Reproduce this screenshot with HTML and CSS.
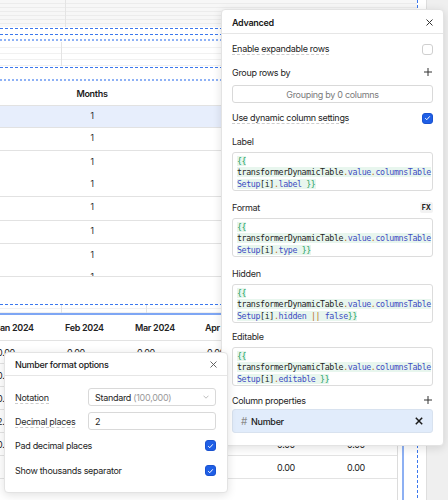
FILE: index.html
```html
<!DOCTYPE html>
<html lang="en">
<head>
    <meta charset="UTF-8">
    <title>Table settings</title>
    <link rel="stylesheet" href="styles.css">
</head>
<body>
    <!-- editor canvas behind the panels -->
    <div class="canvas">
        <div class="stripes stripes-top"><div class="vline vline-top"></div></div>
        <div class="guide guide-28"></div>
        <div class="guide guide-34"></div>
        <div class="guide guide-40 soft"></div>
        <div class="faint-zone"><div class="vline vline-mid"></div></div>
        <div class="guide guide-67"></div>
        <div class="guide guide-80 soft"></div>

        <div class="months-table">
            <div class="mt-row mt-head"><div class="mt-cell">Months</div></div>
            <div class="mt-row r22 selected"><div class="mt-cell">1</div></div>
            <div class="mt-row r23"><div class="mt-cell">1</div></div>
            <div class="mt-row r46"><div class="mt-cell">1<br>1</div></div>
            <div class="mt-row r24"><div class="mt-cell">1</div></div>
            <div class="mt-row r23"><div class="mt-cell">1</div></div>
            <div class="mt-row r33"><div class="mt-cell">1<br>1</div></div>
        </div>

        <div class="guide guide-304"></div>

        <div class="month-grid">
            <div class="mg-stripes"><div class="vline vline-a"></div><div class="vline vline-b"></div></div>
            <div class="mg-row mg-head">
                <div class="mg-cell">Jan 2024</div><div class="mg-cell">Feb 2024</div><div class="mg-cell">Mar 2024</div>
                <div class="mg-cell">Apr 2024</div><div class="mg-cell">May 2024</div><div class="mg-cell">Jun 2024</div>
            </div>
            <div class="mg-row"><div class="mg-cell">0.00</div><div class="mg-cell">0.00</div><div class="mg-cell">0.00</div><div class="mg-cell">0.00</div><div class="mg-cell">0.00</div><div class="mg-cell">0.00</div></div>
            <div class="mg-row"><div class="mg-cell">0.00</div><div class="mg-cell">0.00</div><div class="mg-cell">0.00</div><div class="mg-cell">0.00</div><div class="mg-cell">0.00</div><div class="mg-cell">0.00</div></div>
            <div class="mg-row"><div class="mg-cell">0.00</div><div class="mg-cell">0.00</div><div class="mg-cell">0.00</div><div class="mg-cell">0.00</div><div class="mg-cell">0.00</div><div class="mg-cell">0.00</div></div>
            <div class="mg-row"><div class="mg-cell">2.00</div><div class="mg-cell">0.00</div><div class="mg-cell">0.00</div><div class="mg-cell">0.00</div><div class="mg-cell">0.00</div><div class="mg-cell">0.00</div></div>
            <div class="mg-row"><div class="mg-cell">0.00</div><div class="mg-cell">0.00</div><div class="mg-cell">0.00</div><div class="mg-cell">0.00</div><div class="mg-cell">0.00</div><div class="mg-cell">0.00</div></div>
            <div class="mg-row"><div class="mg-cell"></div><div class="mg-cell"></div><div class="mg-cell"></div><div class="mg-cell"></div><div class="mg-cell">0.00</div><div class="mg-cell">0.00</div></div>
            <div class="mg-row"><div class="mg-cell"></div><div class="mg-cell"></div><div class="mg-cell"></div><div class="mg-cell"></div><div class="mg-cell"></div><div class="mg-cell"></div></div>
        </div>

        <div class="sel-line"></div>
        <div class="sel-dash"></div>
        <div class="side-strip"></div>
    </div>

    <!-- Advanced panel -->
    <div class="panel advanced">
        <div class="panel-head">
            <span class="panel-title">Advanced</span>
            <svg class="close" width="7" height="7" viewBox="0 0 7 7"><path d="M0.5 0.5L6.5 6.5M6.5 0.5L0.5 6.5" stroke="#333" stroke-width="1"/></svg>
        </div>
        <div class="panel-body">
            <div class="row first">
                <span class="hint">Enable expandable rows</span>
                <span class="checkbox"></span>
            </div>
            <div class="row spaced">
                <span>Group rows by</span>
                <svg class="plus" width="8" height="8" viewBox="0 0 8 8"><path d="M4 0V8M0 4H8" stroke="#333" stroke-width="1"/></svg>
            </div>
            <div class="group-input">Grouping by 0 columns</div>
            <div class="row dynamic">
                <span class="hint">Use dynamic column settings</span>
                <span class="checkbox on"><svg width="7" height="6" viewBox="0 0 7 6"><path d="M1.2 3.2L2.8 4.7L5.8 1.3" fill="none" stroke="#fff" stroke-width="1"/></svg></span>
            </div>

            <div class="field label-field">
                <div class="field-label">Label</div>
                <div class="code"><span class="tpl"><span class="br">{{ </span>transformerDynamicTable<span class="pu">.</span><span class="pr">value</span><span class="pu">.</span><span class="pr">columnsTableSetup</span>[i]<span class="pu">.</span><span class="pr">label</span><span class="br"> }}</span></span></div>
            </div>
            <div class="field">
                <div class="field-label">Format <span class="fx">FX</span></div>
                <div class="code"><span class="tpl"><span class="br">{{ </span>transformerDynamicTable<span class="pu">.</span><span class="pr">value</span><span class="pu">.</span><span class="pr">columnsTableSetup</span>[i]<span class="pu">.</span><span class="pr">type</span><span class="br"> }}</span></span></div>
            </div>
            <div class="field">
                <div class="field-label">Hidden</div>
                <div class="code"><span class="tpl"><span class="br">{{ </span>transformerDynamicTable<span class="pu">.</span><span class="pr">value</span><span class="pu">.</span><span class="pr">columnsTableSetup</span>[i]<span class="pu">.</span><span class="pr">hidden</span> <span class="op">||</span> <span class="kw">false</span><span class="br">}}</span></span></div>
            </div>
            <div class="field tight">
                <div class="field-label">Editable</div>
                <div class="code"><span class="tpl"><span class="br">{{ </span>transformerDynamicTable<span class="pu">.</span><span class="pr">value</span><span class="pu">.</span><span class="pr">columnsTableSetup</span>[i]<span class="pu">.</span><span class="pr">editable</span><span class="br"> }}</span></span></div>
            </div>

            <div class="row props-head">
                <span>Column properties</span>
                <svg class="plus" width="8" height="8" viewBox="0 0 8 8"><path d="M4 0V8M0 4H8" stroke="#333" stroke-width="1"/></svg>
            </div>
            <div class="prop-item">
                <span class="hash">#</span>
                <span class="prop-name">Number</span>
                <svg class="remove" width="8" height="8" viewBox="0 0 8 8"><path d="M0.8 0.8L7.2 7.2M7.2 0.8L0.8 7.2" stroke="#1a1a1a" stroke-width="1.5"/></svg>
            </div>
        </div>
    </div>

    <!-- Number format popover -->
    <div class="panel format-pop">
        <div class="panel-head">
            <span class="pop-title">Number format options</span>
            <svg class="close" width="7" height="7" viewBox="0 0 7 7"><path d="M0.5 0.5L6.5 6.5M6.5 0.5L0.5 6.5" stroke="#555" stroke-width="0.9"/></svg>
        </div>
        <div class="pop-body">
            <div class="form-row">
                <span class="form-label"><span class="hint">Notation</span></span>
                <div class="box select">
                    <span>Standard <span class="muted">(100,000)</span></span>
                    <svg width="6" height="4" viewBox="0 0 6 4"><path d="M0.5 0.7L3 3.2L5.5 0.7" fill="none" stroke="#b5b5b5" stroke-width="0.9"/></svg>
                </div>
            </div>
            <div class="form-row">
                <span class="form-label"><span class="hint">Decimal places</span></span>
                <div class="box">2</div>
            </div>
            <div class="form-row check">
                <span>Pad decimal places</span>
                <span class="checkbox on"><svg width="7" height="6" viewBox="0 0 7 6"><path d="M1.2 3.2L2.8 4.7L5.8 1.3" fill="none" stroke="#fff" stroke-width="1"/></svg></span>
            </div>
            <div class="form-row check">
                <span>Show thousands separator</span>
                <span class="checkbox on"><svg width="7" height="6" viewBox="0 0 7 6"><path d="M1.2 3.2L2.8 4.7L5.8 1.3" fill="none" stroke="#fff" stroke-width="1"/></svg></span>
            </div>
        </div>
    </div>
</body>
</html>
```

FILE: styles.css
```css
* {
    box-sizing: border-box;
}
body {
    margin: 0;
    width: 448px;
    height: 500px;
    overflow: hidden;
    position: relative;
    background: #fff;
    font-family: Inter, "Noto Sans", sans-serif;
    font-size: 9px;
    letter-spacing: -0.3px;
    color: #1d1d1d;
}

/* canvas */
.canvas {
    position: absolute;
    inset: 0;
    overflow: hidden;
}
.stripes-top {
    position: absolute;
    left: 0;
    top: 0;
    width: 417px;
    height: 27px;
    background: repeating-linear-gradient(to bottom, #f7f7f7 0 3px, #ececec 3px 4px);
}
.vline {
    position: absolute;
    top: 0;
    bottom: 0;
    width: 1px;
    background: #e4e4e4;
}
.vline-top { left: 65px; }
.vline-mid { left: 61px; }
.vline-a { left: 73px; }
.vline-b { left: 158px; }

.guide {
    position: absolute;
    left: 0;
    width: 222px;
    height: 1px;
    background: repeating-linear-gradient(to right, #3b78ee 0 3px, transparent 3px 5px);
}
.guide.soft {
    height: 2px;
    background: repeating-linear-gradient(to right, #8fb2f5 0 2px, transparent 2px 4px);
}
.guide-28 { top: 28px; }
.guide-34 { top: 34px; }
.guide-40 { top: 39px; }
.guide-67 { top: 67px; }
.guide-80 { top: 79px; }
.guide-304 { top: 304px; }

.faint-zone {
    position: absolute;
    left: 0;
    top: 42px;
    width: 222px;
    height: 24px;
    background: repeating-linear-gradient(to bottom, #fff 0 5px, #f1f1f1 5px 6px);
}

.months-table {
    position: absolute;
    left: 0;
    top: 84px;
    width: 222px;
}
.mt-row {
    border-bottom: 1px solid #e2e2e2;
    overflow: hidden;
}
.mt-cell {
    width: 184px;
    text-align: center;
    line-height: 21px;
    font-size: 8.5px;
    color: #2a2a2a;
}
.mt-head { height: 22px; }
.mt-head .mt-cell {
    font-weight: 600;
    font-size: 9px;
    line-height: 20px;
    color: #1a1a1a;
}
.r22 { height: 22px; }
.r23 { height: 23px; }
.r24 { height: 24px; }
.r33 { height: 33px; }
.r46 { height: 46px; }
.r46 .mt-cell, .r33 .mt-cell { line-height: 22px; }
.selected { background: #e7eefc; }

.month-grid {
    position: absolute;
    left: -12px;
    top: 305px;
    width: 410px;
    height: 200px;
    overflow: hidden;
    border-right: 1px solid #dcdcdc;
}
.mg-stripes {
    position: relative;
    height: 10px;
    background: repeating-linear-gradient(to bottom, #fff 0 3px, #f0f0f0 3px 4px);
    border-bottom: 2px solid #7ea6f4;
}
.mg-row {
    display: flex;
    height: 23px;
    border-bottom: 1px solid #e3e3e3;
}
.mg-head {
    height: 26px;
    font-weight: 600;
}
.mg-cell {
    flex: 0 0 70px;
    padding-left: 9px;
    display: flex;
    align-items: center;
    color: #222;
}
.mg-head .mg-cell { padding-left: 7px; }

.sel-line {
    position: absolute;
    left: 402px;
    top: 300px;
    bottom: 0;
    width: 2px;
    background: #8db0f3;
}
.sel-dash {
    position: absolute;
    left: 417px;
    top: 0;
    bottom: 0;
    width: 1px;
    background: repeating-linear-gradient(to bottom, #3b78ee 0 3px, transparent 3px 5px);
}
.side-strip {
    position: absolute;
    left: 426px;
    top: 0;
    bottom: 0;
    right: 0;
    background: #efefef;
    border-left: 1px solid #dedede;
}

/* panels */
.panel {
    position: absolute;
    background: #fff;
    border: 1px solid #e3e3e3;
    border-radius: 4px;
    box-shadow: 0 2px 10px rgba(0, 0, 0, 0.12);
}
.panel-head {
    height: 24px;
    padding: 0 10px;
    display: flex;
    align-items: center;
    justify-content: space-between;
    border-bottom: 1px solid #e6e6e6;
}
.panel-title {
    font-weight: 600;
    color: #1a1a1a;
}

.advanced {
    left: 221px;
    top: 9px;
    width: 223px;
    height: 437px;
}
.advanced .panel-head {
    height: 24px;
    padding-top: 1px;
}
.panel-body {
    padding: 0 10px;
}
.row {
    height: 14px;
    display: flex;
    align-items: center;
    justify-content: space-between;
}
.row.first { margin-top: 8px; }
.row.spaced { margin-top: 9px; }
.row.dynamic { margin-top: 8px; }
.row.props-head { margin-top: 7px; }
.plus { margin-right: 1px; }

.hint {
    border-bottom: 1px dashed #cdcdcd;
    line-height: 11px;
}
.checkbox {
    width: 11px;
    height: 11px;
    border: 1px solid #cfcfcf;
    border-radius: 3px;
    display: flex;
    align-items: center;
    justify-content: center;
}
.checkbox.on {
    background: #1f5fe6;
    border-color: #1a52cf;
}

.group-input {
    margin-top: 6px;
    height: 18px;
    border: 1px solid #d9d9d9;
    border-radius: 3px;
    display: flex;
    align-items: center;
    justify-content: center;
    color: #7b7b7b;
}

.field { margin-top: 9px; }
.field.label-field { margin-top: 9px; }
.field.tight { margin-top: 6px; }
.field-label {
    height: 14px;
    margin-bottom: 4px;
    display: flex;
    align-items: center;
    justify-content: space-between;
    color: #2a2a2a;
}
.fx {
    font-size: 7px;
    font-weight: 700;
    letter-spacing: 0;
    padding: 1px 2px;
    border-radius: 2px;
    background: #f2f2f2;
    color: #222;
}
.code {
    height: 39px;
    border: 1px solid #dcdcdc;
    border-radius: 3px;
    padding: 3px 0 0 4px;
    font-family: "DejaVu Sans Mono", "Liberation Mono", monospace;
    font-size: 8.3px;
    letter-spacing: -0.38px;
    line-height: 11.3px;
    color: #1f1f1f;
    overflow-wrap: anywhere;
    overflow: hidden;
}
.tpl { background: #e8f6ee; }
.br { color: #23a15f; }
.pu { color: #c0701b; }
.pr { color: #3e4cc2; }
.op { color: #c0701b; }
.kw { color: #3e4cc2; }

.prop-item {
    margin-top: 2px;
    height: 24px;
    border: 1px solid #d8e2ef;
    border-radius: 3px;
    background: #e1ecfb;
    padding: 0 9px 0 8px;
    display: flex;
    align-items: center;
    gap: 4px;
}
.hash {
    color: #8a8a8a;
    font-size: 10px;
}
.prop-name {
    flex: 1;
    font-weight: 500;
    color: #1a1a1a;
}

/* number format popover */
.format-pop {
    left: 4px;
    top: 352px;
    width: 224px;
    height: 141px;
}
.format-pop .panel-head {
    padding: 0 10px;
    height: 23px;
}
.pop-title {
    font-weight: 500;
    color: #1a1a1a;
}
.pop-body {
    padding: 12px 11px 0 10px;
    display: flex;
    flex-direction: column;
    gap: 6px;
}
.form-row {
    height: 18px;
    display: flex;
    align-items: center;
}
.form-row.check {
    justify-content: space-between;
    height: 19px;
}
.form-label {
    width: 73px;
    color: #2a2a2a;
}
.box {
    flex: 1;
    height: 18px;
    border: 1px solid #d9d9d9;
    border-radius: 3px;
    padding: 0 6px;
    display: flex;
    align-items: center;
}
.select { justify-content: space-between; }
.muted { color: #9a9a9a; }
```
